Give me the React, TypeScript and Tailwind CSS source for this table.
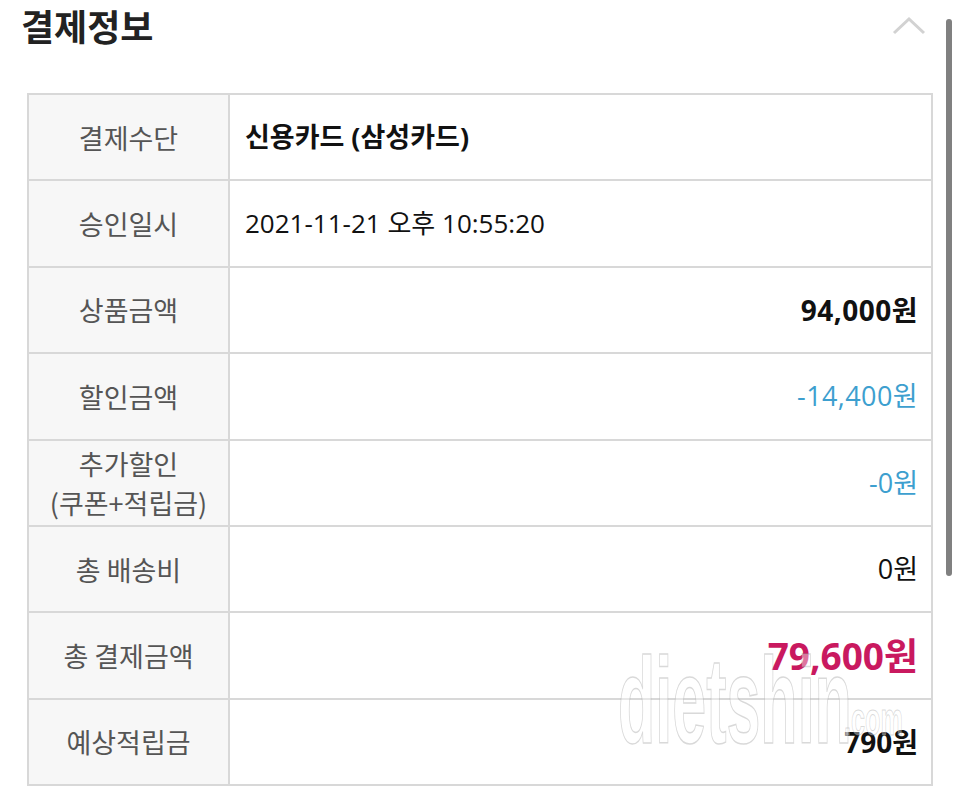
const rows: { label: React.ReactNode; value: string; align: "left" | "right"; cls: string }[] = [
  { label: "결제수단", value: "신용카드 (삼성카드)", align: "left", cls: "font-bold text-[#111] text-[27px]" },
  { label: "승인일시", value: "2021-11-21 오후 10:55:20", align: "left", cls: "text-[#111]" },
  { label: "상품금액", value: "94,000원", align: "right", cls: "font-bold text-[#111] text-[28px] tracking-[0.5px]" },
  { label: "할인금액", value: "-14,400원", align: "right", cls: "text-[#3d9fcf] text-[27px] tracking-[0.4px]" },
  {
    label: (
      <>
        추가할인
        <br />
        (쿠폰+적립금)
      </>
    ),
    value: "-0원",
    align: "right",
    cls: "text-[#3d9fcf] text-[27px]",
  },
  { label: "총 배송비", value: "0원", align: "right", cls: "text-[#111] text-[27px]" },
  { label: "총 결제금액", value: "79,600원", align: "right", cls: "font-bold text-[#c9195f] text-[37px]" },
  { label: "예상적립금", value: "790원", align: "right", cls: "font-bold text-[#111] text-[28px]" },
];

export default function App() {
  return (
    <div className="relative w-[960px] h-[791px] overflow-hidden bg-white font-['Noto_Sans_CJK_KR','Noto_Sans',sans-serif]">
      <div className="flex items-center justify-between h-[50px] pl-[21px] pr-[34px]">
        <h2 className="text-[36px] font-bold text-[#222] leading-[46px]">결제정보</h2>
        <svg width="34" height="20" viewBox="0 0 34 20" className="mt-[2px]">
          <path d="M2 17 L17 3 L32 17" fill="none" stroke="#d2d2d2" strokeWidth="3" />
        </svg>
      </div>

      <div className="mt-[43px] ml-[27px] w-[906px] border-t-2 border-l-2 border-[#d8d8d8]">
        {rows.map((r, i) => (
          <div key={i} className="flex h-[86.4px] border-b-2 border-[#d8d8d8]">
            <div className="w-[201px] shrink-0 flex items-center justify-center text-center bg-[#f7f7f7] border-r-2 border-[#d8d8d8] text-[27px] leading-[39px] text-[#555]">
              <span>{r.label}</span>
            </div>
            <div
              className={
                "flex-1 flex items-center border-r-2 border-[#d8d8d8] pl-[15px] pr-[13px] text-[26px] font-['Open_Sans','Noto_Sans_CJK_KR',sans-serif] " +
                (r.align === "right" ? "justify-end" : "justify-start")
              }
            >
              <span className={r.cls}>{r.value}</span>
            </div>
          </div>
        ))}
      </div>

      {/* watermark */}
      <div className="absolute left-[618px] top-[640px] pointer-events-none flex items-end">
        <span className="block text-[122px] leading-none font-bold font-['Liberation_Sans',sans-serif] text-white/40 [-webkit-text-stroke:1.5px_rgba(160,160,160,0.4)] scale-x-[0.5] origin-left w-[240px]">
          dietshin
        </span>
        <span className="block ml-[-14px] mb-[20px] text-[46px] leading-none font-bold font-['Liberation_Sans',sans-serif] text-white/40 [-webkit-text-stroke:1px_rgba(160,160,160,0.4)] scale-x-[0.55] origin-left">
          .com
        </span>
      </div>

      {/* scrollbar */}
      <div className="absolute left-[946px] top-[19px] w-[6px] h-[557px] rounded-full bg-[#808080]" />
    </div>
  );
}
